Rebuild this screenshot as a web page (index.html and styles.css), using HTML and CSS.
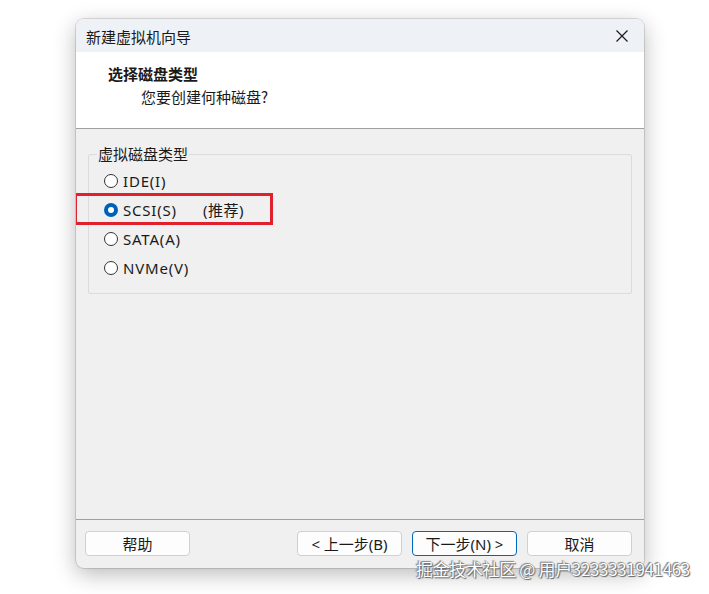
FILE: index.html
```html
<!DOCTYPE html>
<html lang="zh-CN">
  <head>
    <meta charset="UTF-8" />
    <title>新建虚拟机向导</title>
    <link rel="stylesheet" href="styles.css">
  </head>
  <body>
    <div class="window">
      <div class="titlebar">
        <span class="title">新建虚拟机向导</span>
        <svg class="close" width="12" height="12" viewBox="0 0 12 12">
          <path d="M0.5 0.5 L11.5 11.5 M11.5 0.5 L0.5 11.5" stroke="#1a1a1a" stroke-width="1.2" fill="none" />
        </svg>
      </div>

      <div class="header">
        <div class="heading">选择磁盘类型</div>
        <div class="subheading">您要创建何种磁盘?</div>
      </div>

      <div class="content">
        <fieldset class="group">
          <legend>虚拟磁盘类型</legend>
          <label class="option"><span class="radio"></span>IDE(I)</label>
          <label class="option picked">
            <span class="radio checked"></span>SCSI(S)<span class="hint">(推荐)</span>
          </label>
          <label class="option"><span class="radio"></span>SATA(A)</label>
          <label class="option"><span class="radio"></span>NVMe(V)</label>
        </fieldset>
      </div>

      <div class="footer">
        <button class="btn">帮助</button>
        <div class="spacer"></div>
        <button class="btn">&lt; 上一步(B)</button>
        <button class="btn focus">下一步(N) &gt;</button>
        <button class="btn">取消</button>
      </div>
    </div>

    <div class="watermark">掘金技术社区 @ 用户3233331941463</div>
  </body>
</html>
```

FILE: styles.css
```css
/* Page */
body {
  margin: 0;
  padding: 0;
  background: #ffffff;
  font-family: "Noto Sans", "Noto Sans CJK SC", sans-serif;
  font-size: 15px;
  color: #1a1a1a;
  width: 709px;
  height: 594px;
  overflow: hidden;
  position: relative;
}

/* Dialog window */
.window {
  margin: 19px 0 0 76px;
  width: 568px;
  height: 549px;
  border-radius: 8px;
  background: #f0f0f0;
  box-shadow: 0 6px 22px rgba(0, 0, 0, 0.28), 0 0 0 1px rgba(0, 0, 0, 0.12);
  display: flex;
  flex-direction: column;
  overflow: hidden;
}

.titlebar {
  height: 33px;
  background: #eef2f7;
  display: flex;
  align-items: center;
  justify-content: space-between;
  padding: 0 16px 0 10px;
  flex-shrink: 0;
}

.title {
  font-family: "Noto Sans CJK SC", sans-serif;
  font-size: 15px;
  margin-top: 1px;
}

/* Header */
.header {
  background: #ffffff;
  border-bottom: 1px solid #a0a0a0;
  padding: 11px 0 0 32px;
  box-sizing: border-box;
  flex-shrink: 0;
  height: 77px;
}

.heading {
  font-family: "Noto Sans CJK SC", sans-serif;
  font-weight: bold;
  font-size: 15px;
  line-height: 22px;
}

.subheading {
  font-family: "Noto Sans CJK SC", sans-serif;
  font-size: 15px;
  line-height: 22px;
  margin: 1px 0 0 33px;
}

/* Body */
.content {
  flex: 1;
  padding: 15px 12px 0 12px;
}

.group {
  margin: 0;
  padding: 2px 0 12px 15px;
  border: 1px solid #dcdcdc;
  border-radius: 2px;
  height: 150px;
  box-sizing: border-box;
}

.group legend {
  font-family: "Noto Sans CJK SC", sans-serif;
  font-size: 15px;
  padding: 0 1px;
  margin-left: -7px;
  line-height: 20px;
}

.option {
  display: flex;
  align-items: center;
  height: 29px;
  font-size: 15px;
  letter-spacing: 0.8px;
  position: relative;
}

.radio {
  width: 12px;
  height: 12px;
  border: 1px solid #333333;
  border-radius: 50%;
  background: #ffffff;
  margin-right: 5px;
  box-sizing: content-box;
}

.radio.checked {
  width: 6px;
  height: 6px;
  border: 4px solid #005fb8;
}

.hint {
  margin-left: 26px;
  letter-spacing: 0.5px;
}

/* Red highlight around the recommended option */
.picked::after {
  content: "";
  position: absolute;
  left: -30px;
  top: -2px;
  width: 199px;
  height: 32px;
  border: 3px solid #e0202c;
  box-sizing: border-box;
}

/* Footer buttons */
.footer {
  height: 46px;
  border-top: 1px solid #a0a0a0;
  display: flex;
  align-items: center;
  padding: 0 12px 2px 9px;
  gap: 10px;
  flex-shrink: 0;
}

.spacer {
  flex: 1;
}

.btn {
  width: 105px;
  height: 25px;
  background: #fdfdfd;
  border: 1px solid #d0d0d0;
  border-radius: 4px;
  font-family: "Noto Sans", "Noto Sans CJK SC", sans-serif;
  font-size: 15px;
  color: #1a1a1a;
  padding: 0;
}

.btn.focus {
  border-color: #0067c0;
}

/* Watermark */
.watermark {
  position: absolute;
  left: 416px;
  top: 556px;
  font-family: "Noto Sans CJK SC", sans-serif;
  font-size: 17px;
  letter-spacing: -0.35px;
  color: #ffffff;
  text-shadow: 0 0 1px #555, 1px 1px 1px #666, -1px -1px 1px #888;
  white-space: nowrap;
}
```
